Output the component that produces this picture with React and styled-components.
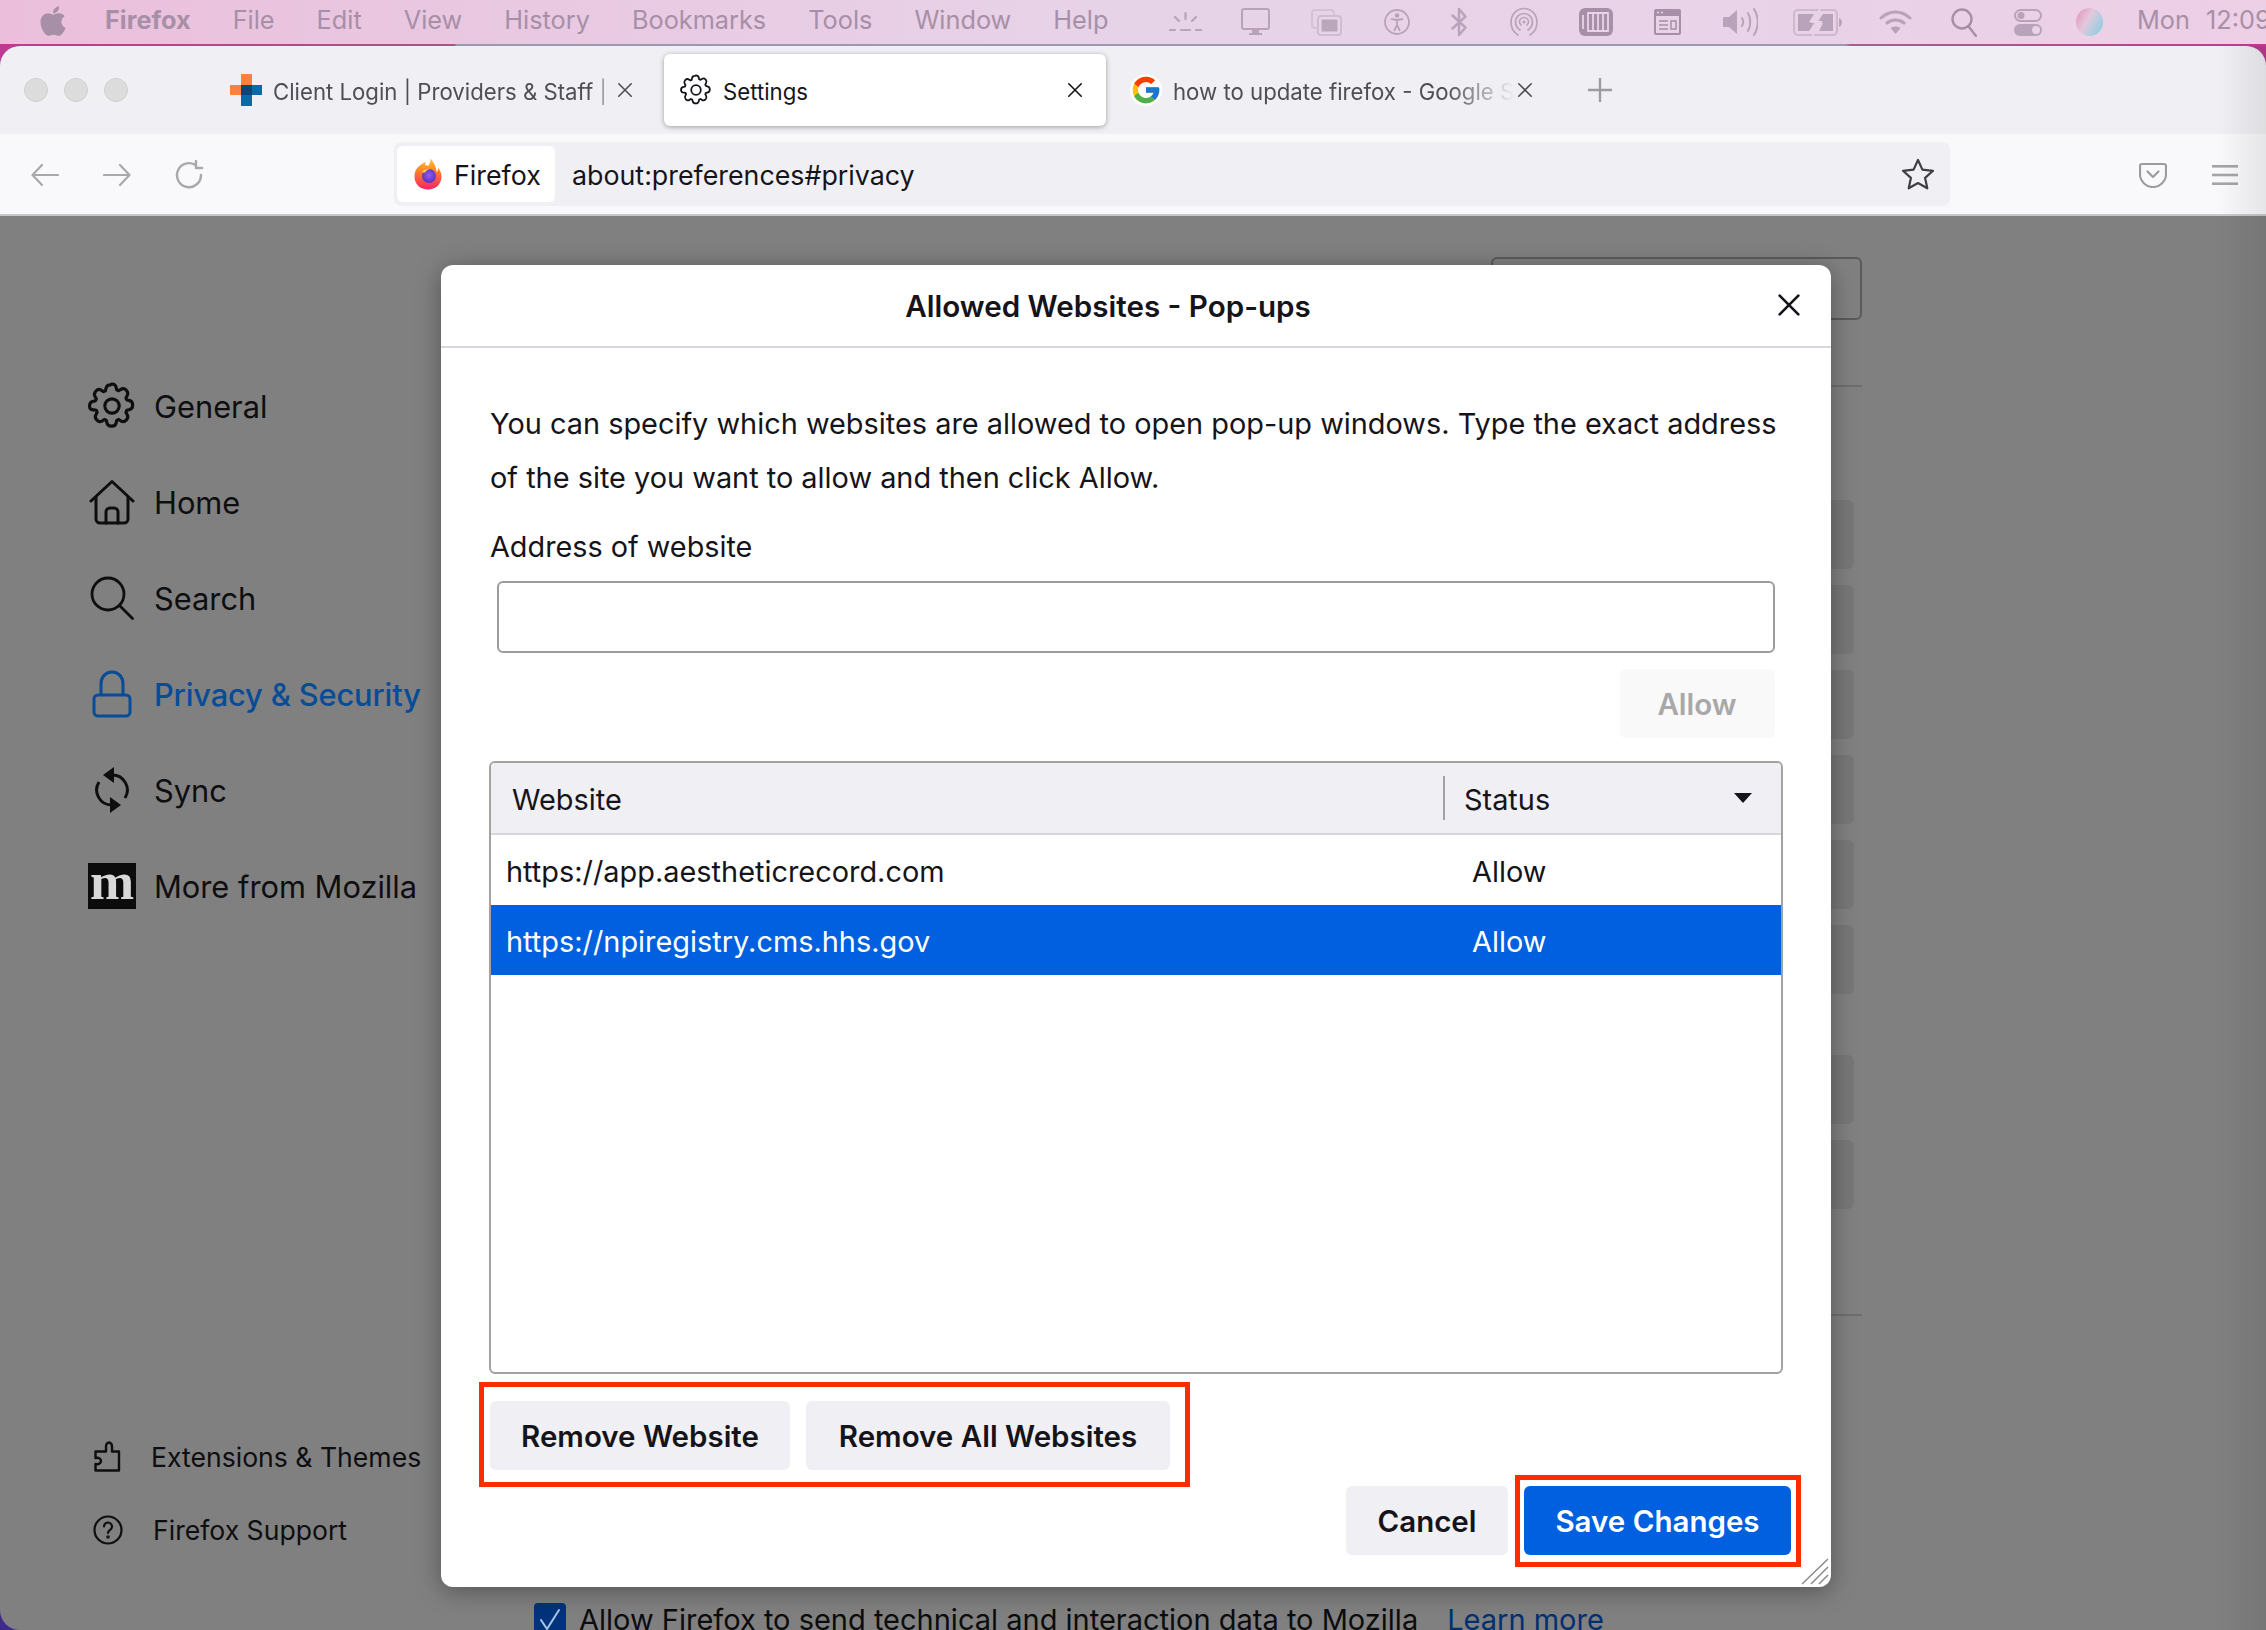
import React from 'react';
import styled, { createGlobalStyle } from 'styled-components';
import { FaApple } from 'react-icons/fa';

const GlobalStyle = createGlobalStyle`
  html, body {
    margin: 0;
    padding: 0;
    overflow: hidden;
  }
  * {
    box-sizing: border-box;
  }
  body {
    font-family: Inter, 'Liberation Sans', sans-serif;
    color: #15141a;
  }
`;

// wallpaper that shows around the rounded window
const Screen = styled.div`
  position: relative;
  width: 2266px;
  height: 1630px;
  overflow: hidden;
  background:
    linear-gradient(180deg, transparent 800px, #3d2a8c 800px),
    linear-gradient(90deg, #bd3a92 0, #a8577f 455px, #9c99ae 456px, #9c99ae 1846px, #a65f92 1850px, #bd3a92 2266px);
  &::after {
    content: '';
    position: absolute;
    top: 46px;
    right: 0;
    bottom: 0;
    width: 50px;
    background: linear-gradient(90deg, rgba(0, 0, 0, 0), rgba(0, 0, 0, 0.08));
    pointer-events: none;
  }
`;

const MenuBar = styled.div`
  display: flex;
  align-items: center;
  height: 44px;
  background: linear-gradient(90deg, #ebbfdb 0, #e7d3e8 1100px, #e8d3e8 1700px, #edcfe6 2266px);
  color: #a78fa8;
  font-size: 25.3px;
`;

const MenuLeft = styled.div`
  flex: 0 0 1169px;
  display: flex;
  align-items: center;
  gap: 42px;
  padding: 0 0 5px 36px;
  height: 100%;
  svg {
    margin-right: -7px;
    margin-top: 3px;
  }
`;

const MenuItem = styled.span`
  font-weight: ${(p) => (p.$bold ? 700 : 400)};
`;

const StatusArea = styled.div`
  display: flex;
  align-items: center;
  height: 100%;
  flex: none;
`;

const StatusSlot = styled.span`
  display: flex;
  flex: none;
  width: ${(p) => p.$w}px;
  margin-left: ${(p) => p.$ml}px;
  svg {
    display: block;
    width: 100%;
    height: 30px;
  }
`;

const Clock = styled.div`
  display: flex;
  gap: 16px;
  margin: 0 0 5px 34px;
  flex: none;
  white-space: nowrap;
`;

const Window = styled.div`
  height: 1584px;
  margin-top: 2px;
  border-radius: 20px 20px 0 20px;
  overflow: hidden;
  background: #808080;
  display: flex;
  flex-direction: column;
`;

const TabBar = styled.div`
  flex: none;
  display: flex;
  align-items: flex-start;
  height: 88px;
  padding-top: 8px;
  background: #f0f0f4;
`;

const Lights = styled.div`
  display: flex;
  gap: 16px;
  padding: 24px 0 0 24px;
  width: 214px;
`;

const Light = styled.span`
  width: 24px;
  height: 24px;
  border-radius: 50%;
  background: #dcdcdc;
  border: 1px solid #cfcfcf;
`;

const Tabs = styled.div`
  display: flex;
  gap: 8px;
`;

const Tab = styled.div`
  display: flex;
  align-items: center;
  width: 442px;
  height: 72px;
  padding: 0 23px 0 16px;
  border-radius: 6px;
  font-size: 22.2px;
  color: ${(p) => (p.$active ? '#15141a' : '#4f4e55')};
  background: ${(p) => (p.$active ? '#fff' : 'transparent')};
  box-shadow: ${(p) => (p.$active ? '0 1px 5px rgba(0, 0, 0, 0.35)' : 'none')};
`;

const TabTitle = styled.span`
  flex: 1;
  min-width: 0;
  margin: 3px 3px 0 11px;
  white-space: nowrap;
  overflow: hidden;
  -webkit-mask-image: ${(p) => (p.$fade ? `linear-gradient(90deg, #000 ${p.$fade}%, transparent 100%)` : 'none')};
`;

const NewTab = styled.div`
  display: flex;
  align-items: center;
  height: 72px;
  margin-left: 31px;
  color: #9c9ca0;
`;

const Toolbar = styled.div`
  flex: none;
  display: flex;
  align-items: center;
  height: 82px;
  padding: 0 5px 0 9px;
  background: #f9f9fb;
  border-bottom: 2px solid #c9c9cc;
`;

const NavButton = styled.div`
  flex: none;
  width: 72px;
  height: 72px;
  padding-top: 2px;
  display: flex;
  align-items: center;
  justify-content: center;
  color: #a9a9ac;
`;

const UrlBar = styled.div`
  flex: 1;
  display: flex;
  align-items: center;
  height: 64px;
  margin: 0 167px 0 169px;
  padding: 4px 15px 4px 3px;
  border-radius: 7px;
  background: #f0f0f4;
  font-size: 26.8px;
`;

const Identity = styled.div`
  display: flex;
  align-items: center;
  gap: 12px;
  width: 158px;
  height: 56px;
  padding-left: 17px;
  border-radius: 6px;
  background: #fff;
`;

const IdentityLabel = styled.span`
  padding-top: 1px;
`;

const UrlText = styled.span`
  flex: 1;
  margin-left: 17px;
  padding-top: 1px;
`;

const Content = styled.div`
  position: relative;
  flex: 1;
  display: flex;
  min-height: 0;
`;

const Sidebar = styled.nav`
  flex: 0 0 534px;
  display: flex;
  flex-direction: column;
  padding: 142px 0 64px 88px;
`;

const NavItem = styled.div`
  flex: none;
  display: flex;
  align-items: center;
  gap: 18px;
  height: 96px;
  font-size: 30.8px;
  color: ${(p) => (p.$active ? '#084c98' : '#0e0e10')};
  font-weight: ${(p) => (p.$active ? 500 : 400)};
  letter-spacing: ${(p) => (p.$active ? '-0.15px' : '0')};
`;

const NavIcon = styled.span`
  flex: none;
  width: 48px;
  display: flex;
  justify-content: center;
`;

const MozillaMark = styled.span`
  display: flex;
  align-items: center;
  justify-content: center;
  width: 48px;
  height: 46px;
  padding-bottom: 10px;
  background: #0c0c0d;
  color: #d8d8d8;
  font: 700 53px/36px 'Liberation Serif', serif;
`;

const SideFooter = styled.div`
  margin-top: auto;
  display: flex;
  flex-direction: column;
  gap: 1px;
`;

const FootLink = styled.div`
  display: flex;
  align-items: center;
  gap: 30px;
  height: 72px;
  padding-left: 5px;
  font-size: 26.6px;
  color: #0e0e10;
`;

// settings page that sits dimmed behind the dialog
const Pane = styled.div`
  flex: 0 0 1328px;
  display: flex;
  flex-direction: column;
  padding-top: 41px;
  min-height: 0;
`;

const SearchBox = styled.div`
  flex: none;
  align-self: flex-end;
  width: 371px;
  height: 63px;
  border: 2px solid #5a5a5a;
  border-radius: 6px;
`;

const Divider = styled.div`
  flex: none;
  height: 2px;
  background: #6e6e6e;
  margin-top: ${(p) => p.$top}px;
`;

const GhostStack = styled.div`
  flex: none;
  align-self: flex-end;
  display: flex;
  flex-direction: column;
  gap: 16px;
  margin: ${(p) => p.$top}px 8px 0 0;
`;

const GhostButton = styled.div`
  width: 150px;
  height: 69px;
  border-radius: 6px;
  background: #777778;
`;

const ConsentRow = styled.div`
  flex: none;
  display: flex;
  align-items: flex-start;
  margin-top: 287px;
  font-size: 29px;
  line-height: 34px;
  color: #0c0c0d;
  white-space: nowrap;
`;

const CheckMark = styled.span`
  flex: none;
  width: 32px;
  height: 32px;
  margin-right: 13px;
  border-radius: 4px;
  background: #00337c;
  display: flex;
  align-items: center;
  justify-content: center;
`;

const LearnMore = styled.a`
  margin-left: 29px;
  color: #003070;
`;

// dialog
const Dialog = styled.div`
  position: absolute;
  left: 441px;
  top: 49px;
  width: 1390px;
  height: 1322px;
  display: flex;
  flex-direction: column;
  background: #fff;
  border-radius: 12px;
  box-shadow: 0 4px 24px rgba(0, 0, 0, 0.35);
`;

const DialogHeader = styled.div`
  position: relative;
  flex: none;
  display: flex;
  align-items: center;
  justify-content: center;
  height: 83px;
  padding: 1px 56px 0 0;
  border-bottom: 2px solid #d7d7db;
  font-size: 29.6px;
  font-weight: 600;
`;

const CloseButton = styled.span`
  position: absolute;
  right: 30px;
  top: 28px;
  display: flex;
`;

const DialogBody = styled.div`
  flex: 1;
  display: flex;
  flex-direction: column;
  padding: 49px 49px 0;
`;

const Intro = styled.p`
  margin: 0;
  font-size: 28.9px;
  line-height: 54px;
  white-space: nowrap;
`;

const FieldLabel = styled.label`
  margin-top: 22px;
  font-size: 28.8px;
  line-height: 40px;
`;

const AddressInput = styled.input`
  height: 72px;
  margin: 14px 7px 0;
  border: 2px solid #9c9c9c;
  border-radius: 6px;
  background: #fff;
  outline: none;
`;

const Button = styled.button`
  height: 69px;
  width: ${(p) => p.$w}px;
  padding: 1px 0 0;
  border: none;
  border-radius: 6px;
  background: ${(p) => (p.$primary ? '#0060df' : '#f0f0f4')};
  color: ${(p) => (p.$primary ? '#fff' : '#15141a')};
  font: 600 29.5px Inter, 'Liberation Sans', sans-serif;
`;

const AllowButton = styled(Button)`
  align-self: flex-end;
  margin: 16px 7px 0 0;
  padding: 0 1px 0 0;
  background: #f9f9fa;
  color: #a8a8aa;
`;

const SiteTable = styled.div`
  flex: none;
  height: 613px;
  margin: 23px -1px 0 -1px;
  border: 2px solid #a2a2a2;
  border-radius: 6px;
  overflow: hidden;
  font-size: 28.9px;
`;

const TableHead = styled.div`
  display: grid;
  grid-template-columns: 952px 1fr;
  align-items: center;
  height: 72px;
  border-bottom: 2px solid #d7d7db;
  background: #f0f0f4;
`;

const HeadCell = styled.div`
  display: flex;
  align-items: center;
  justify-content: space-between;
  height: 44px;
  padding: 2px 29px 0 ${(p) => (p.$sep ? 19 : 21)}px;
  border-left: ${(p) => (p.$sep ? '2px solid #a2a2a2' : 'none')};
`;

const SortArrow = styled.span`
  border-left: 9px solid transparent;
  border-right: 9px solid transparent;
  border-top: 10px solid #15141a;
  margin-top: -3px;
`;

const TableRow = styled.div`
  display: grid;
  grid-template-columns: 952px 1fr;
  align-items: center;
  height: 70px;
  padding-top: 2px;
  background: ${(p) => (p.$selected ? '#0060df' : 'transparent')};
  color: ${(p) => (p.$selected ? '#fff' : '#15141a')};
`;

const RowCell = styled.div`
  padding-left: ${(p) => p.$pad}px;
`;

const ButtonRow = styled.div`
  position: relative;
  align-self: flex-start;
  display: flex;
  gap: 16px;
  margin-top: 27px;
`;

const DialogFooter = styled.div`
  display: flex;
  justify-content: flex-end;
  gap: 16px;
  margin: 16px -9px 0 0;
`;

const SaveWrap = styled.div`
  position: relative;
  display: flex;
`;

// red annotation boxes drawn on top of the screenshot
const Annotation = styled.span`
  position: absolute;
  top: ${(p) => p.$t}px;
  right: ${(p) => p.$r}px;
  bottom: ${(p) => p.$b}px;
  left: ${(p) => p.$l}px;
  border: 5px solid #fb2c00;
  pointer-events: none;
`;

const Resizer = styled.svg`
  position: absolute;
  right: 2px;
  bottom: 2px;
`;

const XIcon = ({ size = 18, width = 2 }) => (
  <svg width={size} height={size} viewBox="0 0 18 18" fill="none" stroke="currentColor" strokeWidth={width} strokeLinecap="round">
    <path d="M2 2l14 14M16 2L2 16" />
  </svg>
);

const GearPath = 'M12 2.6c1 0 1.7.7 1.9 1.6l.2 1 .9.4.9-.6c.8-.5 1.8-.4 2.4.3l.2.2c.6.7.7 1.6.2 2.4l-.5.9.4.9 1 .2c.9.2 1.6 1 1.6 1.9v.4c0 .9-.7 1.7-1.6 1.9l-1 .2-.4.9.5.9c.5.8.4 1.7-.2 2.4l-.2.2c-.6.7-1.6.8-2.4.3l-.9-.6-.9.4-.2 1c-.2.9-.9 1.6-1.9 1.6h-.4c-.9 0-1.7-.7-1.9-1.6l-.2-1-.9-.4-.9.6c-.8.5-1.8.4-2.4-.3l-.2-.2c-.6-.7-.7-1.6-.2-2.4l.5-.9-.4-.9-1-.2C2.700 14.300 2 13.500 2 12.600v-.4c0-.9.7-1.700 1.600-1.900l1-.2.4-.9-.5-.9c-.5-.8-.4-1.700.2-2.400l.2-.2c.6-.7 1.600-.8 2.400-.3l.9.6.9-.4.2-1c.2-.9 1-1.600 1.900-1.600z';

const Gear = ({ size, stroke = 1.4 }) => (
  <svg width={size} height={size} viewBox="1.300 1.900 21.400 21" fill="none" stroke="currentColor" strokeWidth={stroke} strokeLinejoin="round">
    <path d={GearPath} />
    <circle cx="12" cy="12.400" r="3.200" />
  </svg>
);

const ClientFavicon = () => (
  <svg width="32" height="32" viewBox="0 0 32 32">
    <rect x="11" width="11" height="14" fill="#ff7f3f" />
    <rect y="11" width="14" height="10" fill="#ff7f3f" />
    <rect x="11" y="18" width="11" height="14" fill="#0b6aa6" />
    <rect x="14" y="11" width="18" height="10" fill="#0b6aa6" />
    <rect x="11" y="11" width="11" height="10" fill="#0a4674" />
  </svg>
);

const GoogleFavicon = () => (
  <svg width="32" height="32" viewBox="0 0 48 48">
    <circle cx="24" cy="24" r="24" fill="#fff" />
    <path fill="#FFC107" d="M43.611 20.083H42V20H24v8h11.303c-1.649 4.657-6.08 8-11.303 8-6.627 0-12-5.373-12-12s5.373-12 12-12c3.059 0 5.842 1.154 7.961 3.039l5.657-5.657C34.046 6.053 29.268 4 24 4 12.955 4 4 12.955 4 24s8.955 20 20 20 20-8.955 20-20c0-1.341-.138-2.65-.389-3.917z" />
    <path fill="#FF3D00" d="M6.306 14.691l6.571 4.819C14.655 15.108 18.961 12 24 12c3.059 0 5.842 1.154 7.961 3.039l5.657-5.657C34.046 6.053 29.268 4 24 4 16.318 4 9.656 8.337 6.306 14.691z" />
    <path fill="#4CAF50" d="M24 44c5.166 0 9.86-1.977 13.409-5.192l-6.19-5.238A11.91 11.91 0 0 1 24 36c-5.202 0-9.619-3.317-11.283-7.946l-6.522 5.025C9.505 39.556 16.227 44 24 44z" />
    <path fill="#1976D2" d="M43.611 20.083H42V20H24v8h11.303a12.04 12.04 0 0 1-4.087 5.571l6.19 5.238C36.971 39.205 44 34 44 24c0-1.341-.138-2.65-.389-3.917z" />
  </svg>
);

const FirefoxLogo = () => (
  <svg width="28" height="32" viewBox="0 0 28 32">
    <defs>
      <linearGradient id="ffBase" x1="0" y1="0" x2="0" y2="1">
        <stop offset="0" stopColor="#ffc62e" />
        <stop offset="0.45" stopColor="#ff7a2a" />
        <stop offset="1" stopColor="#f5246a" />
      </linearGradient>
      <radialGradient id="ffCore" cx="0.5" cy="0.45" r="0.6">
        <stop offset="0" stopColor="#8f5cf0" />
        <stop offset="1" stopColor="#5a2bb8" />
      </radialGradient>
    </defs>
    <path fill="url(#ffBase)" d="M14 31.500c7.700 0 13.500-5.500 13.500-12.800 0-3.800-1.400-6.800-3.500-9 .2 2-.4 3.400-1.300 4.200C22 8 19.500 4 16.500.5c.3 3.200-1 5.500-2.500 7.500-.9-.7-2-1-3-1 .6-1 .6-2 .4-3C7 6 4.500 8 2.500 11 1 13.200.5 15.500.5 18.700c0 7.300 5.800 12.800 13.500 12.800z" />
    <circle cx="15" cy="18" r="7" fill="url(#ffCore)" />
    <path fill="#ffd84a" d="M8 14c2-2.500 5-3.500 8-3 -2 .5-4 1.500-5 3.500-1 .2-2 .1-3-.5z" />
  </svg>
);

const ArrowBack = () => (
  <svg width="28" height="24" viewBox="0 0 28 24" fill="none" stroke="currentColor" strokeWidth="2.200" strokeLinecap="round" strokeLinejoin="round">
    <path d="M27 12H2M11 2L1.500 12 11 22" />
  </svg>
);

const ArrowForward = () => (
  <svg width="28" height="24" viewBox="0 0 28 24" fill="none" stroke="currentColor" strokeWidth="2.200" strokeLinecap="round" strokeLinejoin="round">
    <path d="M1 12h25M17 2l9.500 10L17 22" />
  </svg>
);

const Reload = () => (
  <svg width="30" height="30" viewBox="0 0 30 30" fill="none" stroke="currentColor" strokeWidth="2.400" strokeLinecap="round" strokeLinejoin="round">
    <path d="M21 4.800A12 12 0 1 0 27 15" />
    <path d="M22 1v7h6" />
  </svg>
);

const StarIcon = () => (
  <svg width="34" height="32" viewBox="0 0 34 32" fill="none" stroke="#3f3e45" strokeWidth="2.200" strokeLinejoin="round">
    <path d="M17 2l4.400 9.600 10.600 1.200-7.900 7.100 2.200 10.400L17 25l-9.300 5.300 2.200-10.400L2 12.800l10.600-1.200z" />
  </svg>
);

const PocketIcon = () => (
  <svg width="28" height="26" viewBox="0 0 28 26" fill="none" stroke="#9c9ca0" strokeWidth="2.200" strokeLinecap="round" strokeLinejoin="round">
    <path d="M3 2h22a2 2 0 0 1 2 2v8.500C27 19 21 25 14 25S1 19 1 12.500V4a2 2 0 0 1 2-2z" />
    <path d="M8.500 9.500L14 15l5.500-5.500" />
  </svg>
);

const HamburgerIcon = () => (
  <svg width="26" height="20" viewBox="0 0 26 20" fill="#a5a5a8">
    <rect width="26" height="2.600" y="0" />
    <rect width="26" height="2.600" y="8.700" />
    <rect width="26" height="2.600" y="17.400" />
  </svg>
);

const HomeIcon = () => (
  <svg width="46" height="46" viewBox="0 0 46 46" fill="none" stroke="currentColor" strokeWidth="3" strokeLinecap="round" strokeLinejoin="round">
    <path d="M2 22L23 2.500 44 22" />
    <path d="M7 18v22a4 4 0 0 0 4 4h24a4 4 0 0 0 4-4V18" />
    <path d="M17 44V33a4 4 0 0 1 4-4h4a4 4 0 0 1 4 4v11" />
  </svg>
);

const SearchIcon = () => (
  <svg width="44" height="44" viewBox="0 0 44 44" fill="none" stroke="currentColor" strokeWidth="2.800" strokeLinecap="round">
    <circle cx="18" cy="18" r="16" />
    <path d="M30 30l12.500 12.500" />
  </svg>
);

const LockIcon = () => (
  <svg width="40" height="48" viewBox="0 0 40 48" fill="none" stroke="currentColor" strokeWidth="3" strokeLinejoin="round">
    <rect x="2" y="25" width="36" height="21" rx="4" />
    <path d="M9 25V14C9 7 13.500 2 20 2s11 5 11 12v11" />
  </svg>
);

const SyncIcon = () => (
  <svg width="36" height="48" viewBox="0 0 36 48" fill="none" stroke="currentColor" strokeWidth="3">
    <path d="M18 9a15 15 0 0 1 13 23" />
    <path d="M18 39a15 15 0 0 1-13-23" />
    <path fill="currentColor" stroke="none" d="M20 1v16L9 9zM16 47V31l11 8z" />
  </svg>
);

const PuzzleIcon = () => (
  <svg width="28" height="32" viewBox="0 0 28 32" fill="none" stroke="currentColor" strokeWidth="2.400" strokeLinejoin="round">
    <path d="M13 10.500V5.500c0-2 1.200-4 3-4s3 2 3 4v5h7v19H2.500v-6.500c3.500.8 5.500-1 5.500-3s-2-3.800-5.500-3V10.500z" />
  </svg>
);

const HelpIcon = () => (
  <svg width="30" height="30" viewBox="0 0 30 30" fill="none" stroke="currentColor" strokeWidth="2.200" strokeLinecap="round">
    <circle cx="15" cy="15" r="13.500" />
    <path d="M11 11.500a4 4 0 1 1 6 3.500c-1.500.8-2 1.600-2 3" />
    <circle cx="15" cy="22" r="0.700" fill="currentColor" />
  </svg>
);

const CheckIcon = () => (
  <svg width="24" height="24" viewBox="0 0 24 24" fill="none" stroke="#a9c6ea" strokeWidth="2" strokeLinecap="round" strokeLinejoin="round">
    <path d="M3 13l6 9L21 3" />
  </svg>
);

// menu bar extras
const ink = '#b9a3ba';
const strong = '#a78fa8';

const statusItems = [
  { w: 33, ml: 0, view: '0 0 33 30', draw: <g stroke={ink} strokeWidth="2.200" strokeLinecap="round"><path d="M16.500 6v6M6 10l4 4M27 10l-4 4M1 23h5M12 23h9M27 23h5" /></g> },
  { w: 29, ml: 39, view: '0 0 29 30', draw: <g><rect x="1" y="2" width="27" height="20" rx="2" fill="none" stroke={ink} strokeWidth="2" /><path fill={ink} d="M11 23h7v3h3v2H8v-2h3z" /></g> },
  { w: 31, ml: 41, view: '0 0 31 30', draw: <g><rect x="1" y="3" width="22" height="18" rx="3" fill="none" stroke="#d6c2d6" strokeWidth="2" /><rect x="7" y="9" width="23" height="19" rx="3" fill="#e8d3e8" stroke="#d0bcd1" strokeWidth="2" /><rect x="10.500" y="12.500" width="16" height="12" fill="#bba7bc" /></g> },
  { w: 26, ml: 42, view: '0 0 26 30', draw: <g fill="none" stroke={ink} strokeWidth="1.800"><circle cx="13" cy="15" r="12" /><circle cx="13" cy="8.500" r="1.400" fill={ink} /><path d="M7 12l6 1 6-1M13 13v5M13 18l-3 6M13 18l3 6" /></g> },
  { w: 16, ml: 41, view: '0 0 16 30', draw: <path fill="none" stroke={ink} strokeWidth="2.400" strokeLinecap="round" strokeLinejoin="round" d="M1.500 8.500l13 12L8 28V2l6.500 7.500-13 12" /> },
  { w: 28, ml: 43, view: '0 0 28 30', draw: <g fill="none" stroke={ink} strokeWidth="1.700" strokeLinecap="round"><path d="M8 28C3 25 1 20 1 15 1 7.500 7 1.500 14 1.500S27 7.500 27 15c0 5-2 10-7 13" /><path d="M10 23c-3-2-4.500-5-4.500-8 0-5 4-8.500 8.500-8.500s8.500 3.500 8.500 8.500c0 3-1.500 6-4.500 8" /><path d="M11 18c-1-1-1.500-2-1.500-3 0-2.500 2-4.500 4.500-4.500s4.500 2 4.500 4.500c0 1-.5 2-1.500 3" /><circle cx="14" cy="15" r="1.500" fill={ink} stroke="none" /></g> },
  { w: 34, ml: 41, view: '0 0 34 30', draw: <g><rect width="34" height="28" y="1" rx="6" fill={strong} /><path stroke="#e8d3e8" strokeWidth="1.800" d="M4 8v14M9 6v18H29V6zM14 6v18M19 6v18M24 6v18" fill="none" /></g> },
  { w: 29, ml: 40, view: '0 0 29 30', draw: <g><rect x="1" y="2" width="27" height="26" rx="2" fill={strong} /><rect x="3" y="9" width="23" height="17" fill="#e8d3e8" /><path stroke={strong} strokeWidth="1.500" d="M6 14h9M6 18h9M6 22h9M18 14h5v8h-5z" fill="none" /><path stroke="#e8d3e8" strokeWidth="1.500" strokeDasharray="2 2" d="M4 5.500h7" /></g> },
  { w: 36, ml: 40, view: '0 0 36 30', draw: <g fill={ink}><path d="M1 10h6l8-7v24l-8-7H1z" /><path fill="none" stroke={ink} strokeWidth="2" strokeLinecap="round" d="M20 11c1.500 2.500 1.500 5.500 0 8M26 6c3 5 3 13 0 18M32 2c5 8 5 18 0 26" /></g> },
  { w: 50, ml: 35, view: '0 0 50 30', draw: <g><rect x="1" y="3" width="43" height="25" rx="4" fill="none" stroke="#cdb8ce" strokeWidth="2" /><path fill={ink} d="M5 7h16l-5 8h6l-6 9H5zM30 7h10v17H26l4-8h-6zM46 11c2 1 3 2 3 4.500S48 19 46 20z" /><path fill="none" stroke="#e8d3e8" strokeWidth="1.800" d="M28 0l-9 15h9L19 30" /></g> },
  { w: 33, ml: 36, view: '0 0 33 30', draw: <g fill="none" stroke={ink} strokeWidth="3" strokeLinecap="round"><path d="M2 11c9-8 20-8 29 0M8 16c5-4 12-4 17 0" /><path fill={ink} stroke="none" d="M16.500 27l-5-6c3-2 7-2 10 0z" /></g> },
  { w: 26, ml: 39, view: '0 0 26 30', draw: <g fill="none" stroke={strong} strokeWidth="2.400" strokeLinecap="round"><circle cx="11" cy="12" r="9.500" /><path d="M18 20l7 9" /></g> },
  { w: 28, ml: 37, view: '0 0 28 30', draw: <g><rect x="1" y="3" width="26" height="11" rx="5.500" fill="none" stroke={ink} strokeWidth="2" /><circle cx="7" cy="8.500" r="3.500" fill={ink} /><rect y="17" width="28" height="12" rx="6" fill={ink} /><circle cx="22" cy="23" r="4" fill="#e8d3e8" /></g> },
  { w: 27, ml: 34, view: '0 0 27 30', draw: <g><defs><linearGradient id="siri" x1="0" y1="0" x2="1" y2="0.600"><stop offset="0" stopColor="#e88fb8" /><stop offset="0.5" stopColor="#e3c8dc" /><stop offset="1" stopColor="#96cfe0" /></linearGradient></defs><ellipse cx="13.500" cy="15" rx="13.500" ry="14" fill="url(#siri)" /></g> },
];

const navItems = [
  { label: 'General', icon: <Gear size={48} /> },
  { label: 'Home', icon: <HomeIcon /> },
  { label: 'Search', icon: <SearchIcon /> },
  { label: 'Privacy & Security', icon: <LockIcon />, active: true },
  { label: 'Sync', icon: <SyncIcon /> },
  { label: 'More from Mozilla', icon: <MozillaMark>m</MozillaMark> },
];

const menus = ['File', 'Edit', 'View', 'History', 'Bookmarks', 'Tools', 'Window', 'Help'];

const sites = [
  { url: 'https://app.aestheticrecord.com', status: 'Allow' },
  { url: 'https://npiregistry.cms.hhs.gov', status: 'Allow', selected: true },
];

export default function App() {
  return (
    <Screen>
      <GlobalStyle />
      <MenuBar>
        <MenuLeft>
          <FaApple size={34} />
          <MenuItem $bold>Firefox</MenuItem>
          {menus.map((m) => (
            <MenuItem key={m}>{m}</MenuItem>
          ))}
        </MenuLeft>
        <StatusArea>
          {statusItems.map((s, i) => (
            <StatusSlot key={i} $w={s.w} $ml={s.ml}>
              <svg viewBox={s.view}>{s.draw}</svg>
            </StatusSlot>
          ))}
          <Clock>
            <span>Mon</span>
            <span>12:09</span>
          </Clock>
        </StatusArea>
      </MenuBar>

      <Window>
        <TabBar>
          <Lights>
            <Light />
            <Light />
            <Light />
          </Lights>
          <Tabs>
            <Tab>
              <ClientFavicon />
              <TabTitle $fade={94}>Client Login | Providers &amp; Staff |</TabTitle>
              <XIcon size={16} width={1.800} />
            </Tab>
            <Tab $active>
              <Gear size={32} stroke={1.2} />
              <TabTitle>Settings</TabTitle>
              <XIcon size={16} width={1.800} />
            </Tab>
            <Tab>
              <GoogleFavicon />
              <TabTitle $fade={80}>how to update firefox - Google S</TabTitle>
              <XIcon size={16} width={1.800} />
            </Tab>
          </Tabs>
          <NewTab>
            <svg width="26" height="26" viewBox="0 0 26 26" stroke="currentColor" strokeWidth="2.400">
              <path d="M13 1v24M1 13h24" />
            </svg>
          </NewTab>
        </TabBar>

        <Toolbar>
          <NavButton><ArrowBack /></NavButton>
          <NavButton><ArrowForward /></NavButton>
          <NavButton><Reload /></NavButton>
          <UrlBar>
            <Identity>
              <FirefoxLogo />
              <IdentityLabel>Firefox</IdentityLabel>
            </Identity>
            <UrlText>about:preferences#privacy</UrlText>
            <StarIcon />
          </UrlBar>
          <NavButton><PocketIcon /></NavButton>
          <NavButton><HamburgerIcon /></NavButton>
        </Toolbar>

        <Content>
          <Sidebar>
            {navItems.map((n) => (
              <NavItem key={n.label} $active={n.active}>
                <NavIcon>{n.icon}</NavIcon>
                {n.label}
              </NavItem>
            ))}
            <SideFooter>
              <FootLink>
                <PuzzleIcon />
                Extensions &amp; Themes
              </FootLink>
              <FootLink>
                <HelpIcon />
                Firefox Support
              </FootLink>
            </SideFooter>
          </Sidebar>

          <Pane>
            <SearchBox />
            <Divider $top={65} />
            <GhostStack $top={113}>
              {[0, 1, 2, 3, 4, 5].map((i) => (
                <GhostButton key={i} />
              ))}
            </GhostStack>
            <GhostStack $top={61}>
              <GhostButton />
              <GhostButton />
            </GhostStack>
            <Divider $top={105} />
            <ConsentRow>
              <CheckMark><CheckIcon /></CheckMark>
              Allow Firefox to send technical and interaction data to Mozilla
              <LearnMore>Learn more</LearnMore>
            </ConsentRow>
          </Pane>

          <Dialog>
            <DialogHeader>
              Allowed Websites - Pop-ups
              <CloseButton><XIcon size={24} width={2} /></CloseButton>
            </DialogHeader>
            <DialogBody>
              <Intro>
                You can specify which websites are allowed to open pop-up windows. Type the exact address
                <br />
                of the site you want to allow and then click Allow.
              </Intro>
              <FieldLabel>Address of website</FieldLabel>
              <AddressInput />
              <AllowButton $w={155}>Allow</AllowButton>
              <SiteTable>
                <TableHead>
                  <HeadCell>Website</HeadCell>
                  <HeadCell $sep>
                    Status
                    <SortArrow />
                  </HeadCell>
                </TableHead>
                {sites.map((s) => (
                  <TableRow key={s.url} $selected={s.selected}>
                    <RowCell $pad={15}>{s.url}</RowCell>
                    <RowCell $pad={29}>{s.status}</RowCell>
                  </TableRow>
                ))}
              </SiteTable>
              <ButtonRow>
                <Button $w={300}>Remove Website</Button>
                <Button $w={364}>Remove All Websites</Button>
                <Annotation $t={-19} $r={-20} $b={-17} $l={-11} />
              </ButtonRow>
              <DialogFooter>
                <Button $w={162}>Cancel</Button>
                <SaveWrap>
                  <Button $w={267} $primary>Save Changes</Button>
                  <Annotation $t={-11} $r={-10} $b={-12} $l={-9} />
                </SaveWrap>
              </DialogFooter>
            </DialogBody>
            <Resizer width="28" height="27" viewBox="0 0 28 27" fill="none" stroke="#8a8a8a" strokeWidth="1.500">
              <path d="M1 26L27 1M10 26L27 9M18 26L27 17" />
            </Resizer>
          </Dialog>
        </Content>
      </Window>
    </Screen>
  );
}
